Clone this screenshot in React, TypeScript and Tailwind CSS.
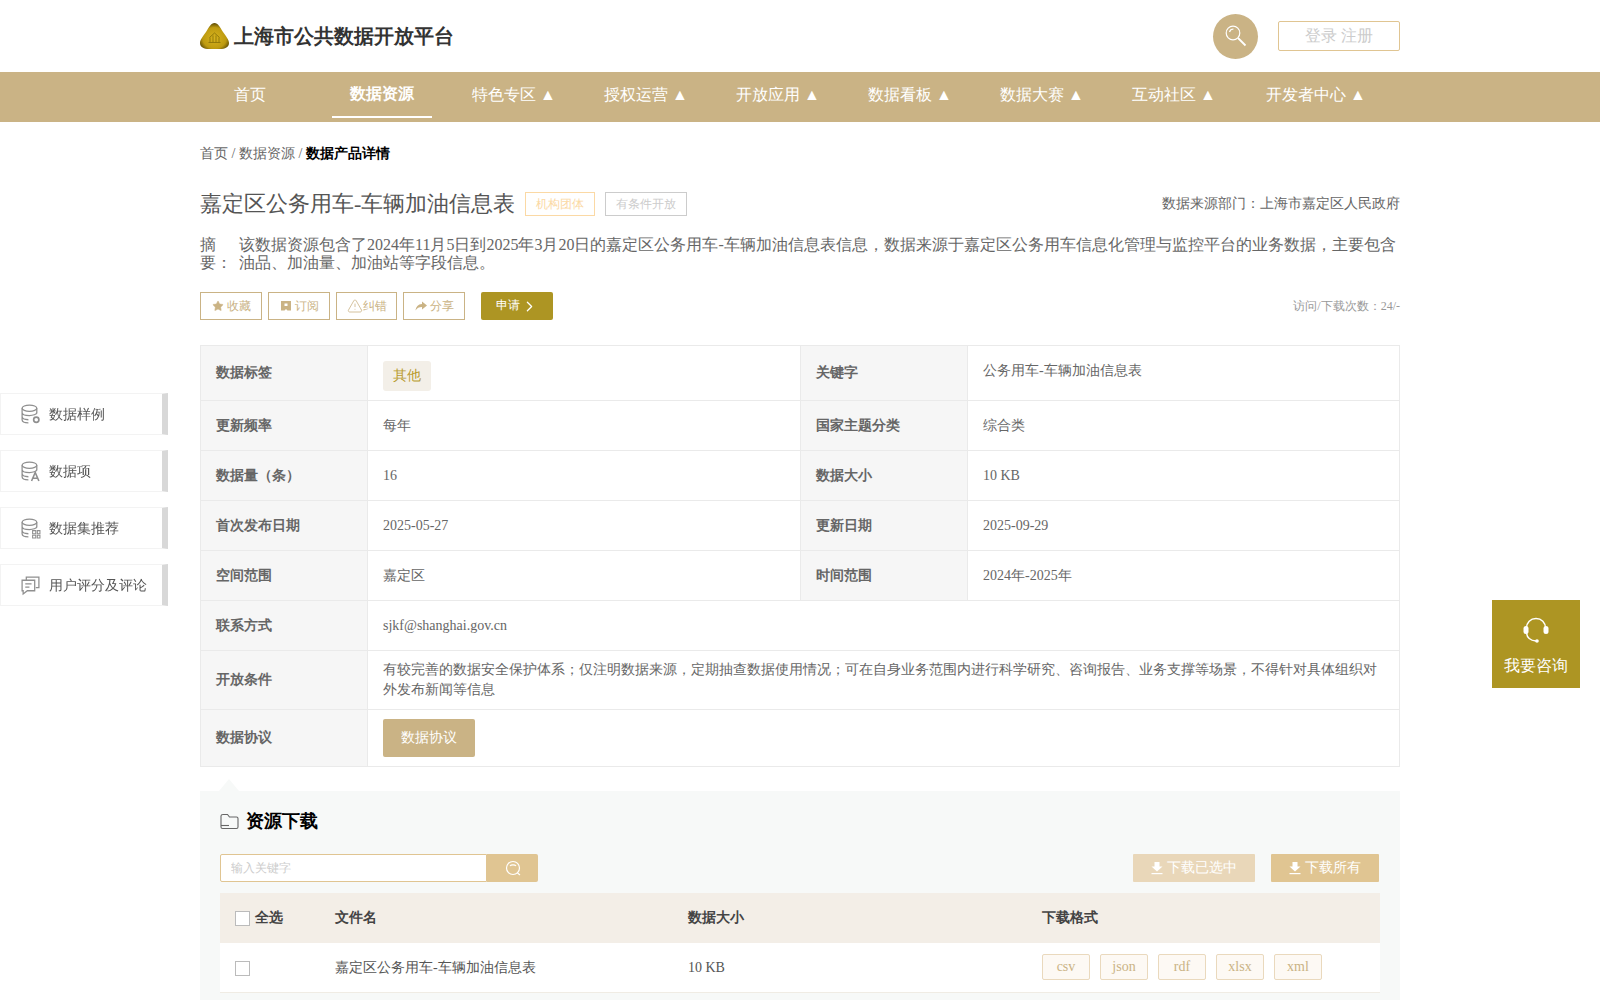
import { ChevronRight, Star, TriangleAlert } from "lucide-react";

const navItems = ["特色专区 ▲", "授权运营 ▲", "开放应用 ▲", "数据看板 ▲", "数据大赛 ▲", "互动社区 ▲"];

const labelCell = "bg-[#f6f6f6] border border-[#eaeaea] pl-[15px] font-bold align-middle";
const valueCell = "border border-[#eaeaea] pl-[15px] pr-[15px] align-middle";

function Logo() {
  return (
    <svg width="29" height="26" viewBox="0 0 29 26">
      <defs>
        <radialGradient id="gold" cx="50%" cy="58%" r="58%">
          <stop offset="0%" stopColor="#d8b41e" />
          <stop offset="70%" stopColor="#bd9a10" />
          <stop offset="100%" stopColor="#5a4905" />
        </radialGradient>
      </defs>
      <path d="M14.500 0C18 0 20 4 23 9C26 13 29 17 29 20C29 24 25 26 20 26H9C4 26 0 24 0 20C0 17 3 13 6 9C9 4 11 0 14.500 0Z" fill="url(#gold)" />
      <path d="M8.500 19.500H20.500M10 19.500V14.500M13 19.500V12.500M16 19.500V12.500M19 19.500V14.500M9.500 14.500L14.500 10L19.500 14.500" stroke="#937a0a" strokeWidth="1" fill="none" />
    </svg>
  );
}

function HeaderSearch() {
  return (
    <svg width="22" height="22" viewBox="0 0 22 22" fill="none" stroke="#fff" strokeWidth="1.200">
      <circle cx="8" cy="8" r="6.800" />
      <path d="M4.500 7C5 5 6.500 4 8.500 4" />
      <path d="M13 13L20.500 20.500" strokeWidth="1.800" />
    </svg>
  );
}

function DbIcon({ kind }: { kind: "gear" | "a" | "grid" }) {
  return (
    <svg width="21" height="21" viewBox="0 0 20 20" fill="none" stroke="#8f8f8f" strokeWidth="1.200">
      <ellipse cx="9" cy="4" rx="7" ry="3" />
      <path d="M2 4V15C2 17 5 18 8 18M16 4V9M2 8C2 10 5 11 9 11C12 11 16 10 16 8M2 12C2 14 5 15 8 15" />
      {kind === "gear" && <circle cx="15.500" cy="15" r="2.500" strokeWidth="1.600" />}
      {kind === "a" && <path d="M11 19L14.500 11L18 19M12.300 16.500H16.700" strokeWidth="1.500" />}
      {kind === "grid" && (
        <path d="M12 12H15V15H12ZM16.500 12H19V15H16.500ZM12 16.500H15V19H12ZM16.500 16.500H19V19H16.500Z" strokeWidth="1" />
      )}
    </svg>
  );
}

function CommentIcon() {
  return (
    <svg width="21" height="21" viewBox="0 0 20 20" fill="none" stroke="#8f8f8f" strokeWidth="1.200">
      <path d="M6 5V2H18V12H15" />
      <path d="M2 5H14V15H7L3 18V15H2Z" />
      <path d="M5 8.500H11M5 11.500H9" />
    </svg>
  );
}

function DownloadIcon() {
  return (
    <svg width="12" height="14" viewBox="0 0 12 14" fill="#fff">
      <path d="M3.500 1H8.500V5.500H11.500L6 10.500L0.500 5.500H3.500Z" />
      <rect x="0.500" y="12" width="11" height="1.200" />
    </svg>
  );
}

function Headset() {
  return (
    <svg width="26" height="26" viewBox="0 0 26 26" fill="none">
      <path d="M3.500 13V11C3.500 5.500 7.500 1.500 13 1.500C18.500 1.500 22.500 5.500 22.500 11V13" stroke="#fff" strokeWidth="1.500" />
      <path d="M3.500 16C4 20 7 23.500 13 24" stroke="#fff" strokeWidth="1.500" />
      <rect x="0.500" y="9" width="5" height="8" rx="2.500" fill="#fff" />
      <rect x="20.500" y="9" width="5" height="8" rx="2.500" fill="#fff" />
      <circle cx="14" cy="24" r="1.800" fill="#fff" />
    </svg>
  );
}

function ActionButton({ icon, text, className }: { icon: React.ReactNode; text: string; className: string }) {
  return (
    <button className={"h-[28px] border border-[#cab385] text-xs text-[#cab385] flex items-center justify-center " + className}>
      {icon}
      {text}
    </button>
  );
}

function SideItem({ icon, text }: { icon: React.ReactNode; text: string }) {
  return (
    <div className="w-[168px] h-[42px] flex items-center bg-white border border-[#f3f3f3] border-r-[6px] border-r-[#d8d8d8] pl-[19px] text-sm text-[#555]">
      <span className="w-[29px] flex">{icon}</span>
      <span className="pt-[2px]">{text}</span>
    </div>
  );
}

export default function App() {
  return (
    <div className="h-[1000px] overflow-hidden bg-white text-[#666] [font-family:'Liberation_Serif',serif]">
      <header className="h-[72px] w-[1200px] mx-auto flex items-center">
        <Logo />
        <h1 className="ml-[5px] text-xl font-bold text-[#333]">上海市公共数据开放平台</h1>
        <div className="ml-auto w-[45px] h-[45px] rounded-full bg-[#cab385] flex items-center justify-center">
          <HeaderSearch />
        </div>
        <div className="ml-[20px] w-[122px] h-[30px] border border-[#e0c592] rounded-[2px] flex items-center justify-center text-base text-[#ccc]">
          登录 注册
        </div>
      </header>

      <nav className="h-[50px] bg-[#cab385]">
        <div className="w-[1200px] mx-auto flex gap-[32px] h-full text-base text-white">
          <a className="w-[100px] flex items-center justify-center pb-[4px]">首页</a>
          <a className="w-[100px] flex items-center justify-center font-bold border-b-2 border-white h-[46px]">数据资源</a>
          {navItems.map((item) => (
            <a key={item} className="w-[100px] flex items-center justify-center pb-[4px]">
              {item}
            </a>
          ))}
          <a className="w-[120px] flex items-center justify-center pb-[4px]">开发者中心 ▲</a>
        </div>
      </nav>

      <main className="w-[1200px] mx-auto">
        <div className="pt-[24px] text-sm leading-[16px]">
          首页 / 数据资源 / <span className="font-bold text-black">数据产品详情</span>
        </div>

        <div className="mt-[26px] flex items-center h-[32px]">
          <h2 className="text-[22px] text-[#555] pb-[2px]">嘉定区公务用车-车辆加油信息表</h2>
          <span className="ml-[10px] w-[70px] h-[24px] border border-[#fbd9a5] text-xs text-[#fbd9a5] flex items-center justify-center">机构团体</span>
          <span className="ml-[10px] w-[82px] h-[24px] border border-[#ccc] text-xs text-[#ccc] flex items-center justify-center">有条件开放</span>
          <span className="ml-auto text-sm">数据来源部门：上海市嘉定区人民政府</span>
        </div>

        <div className="mt-[16px] flex text-base leading-[18px]">
          <div className="w-[39px] shrink-0">
            摘
            <br />
            要：
          </div>
          <p className="pr-[4px]">
            该数据资源包含了2024年11月5日到2025年3月20日的嘉定区公务用车-车辆加油信息表信息，数据来源于嘉定区公务用车信息化管理与监控平台的业务数据，主要包含油品、加油量、加油站等字段信息。
          </p>
        </div>

        <div className="mt-[20px] flex items-center">
          <ActionButton className="w-[62px] gap-[3px]" icon={<Star size={12} fill="#cab385" strokeWidth={1} />} text="收藏" />
          <ActionButton
            className="w-[62px] ml-[6px] gap-[3px]"
            icon={
              <svg width="12" height="12" viewBox="0 0 12 12" fill="#cab385">
                <path d="M1 1H11V10.500H7.500L6 9L4.500 10.500H1ZM4.500 3.500V6H7.500V3.500Z" />
              </svg>
            }
            text="订阅"
          />
          <ActionButton className="w-[61px] ml-[6px]" icon={<TriangleAlert size={16} strokeWidth={1.200} />} text="纠错" />
          <ActionButton
            className="w-[62px] ml-[6px] gap-[3px]"
            icon={
              <svg width="12" height="12" viewBox="0 0 12 12" fill="#cab385">
                <path d="M7 1.500L12 5.500L7 9.500V7C4 7 2 8 0.500 10.500C1 7 3 4 7 4Z" />
              </svg>
            }
            text="分享"
          />
          <button className="ml-[16px] w-[72px] h-[28px] rounded-[2px] bg-[#ad9523] text-xs text-white flex items-center justify-center gap-[1px]">
            <span className="pb-[3px]">申请</span>
            <ChevronRight size={17} strokeWidth={1.800} />
          </button>
          <span className="ml-auto text-xs text-[#999]">访问/下载次数：24/-</span>
        </div>

        <table className="mt-[25px] w-[1199px] table-fixed border-collapse text-sm">
          <colgroup>
            <col className="w-[167px]" />
            <col className="w-[433px]" />
            <col className="w-[167px]" />
            <col className="w-[432px]" />
          </colgroup>
          <tbody>
            <tr className="h-[55px]">
              <td className={labelCell}>数据标签</td>
              <td className={valueCell}>
                <span className="mt-[6px] inline-flex w-[48px] h-[30px] rounded-[3px] bg-[#f3efe8] text-[#b89b2e] items-center justify-center">其他</span>
              </td>
              <td className={labelCell}>关键字</td>
              <td className={valueCell + " pb-[5px]"}>公务用车-车辆加油信息表</td>
            </tr>
            {[
              ["更新频率", "每年", "国家主题分类", "综合类"],
              ["数据量（条）", "16", "数据大小", "10 KB"],
              ["首次发布日期", "2025-05-27", "更新日期", "2025-09-29"],
              ["空间范围", "嘉定区", "时间范围", "2024年-2025年"],
            ].map((row) => (
              <tr key={row[0]} className="h-[50px]">
                <td className={labelCell}>{row[0]}</td>
                <td className={valueCell}>{row[1]}</td>
                <td className={labelCell}>{row[2]}</td>
                <td className={valueCell}>{row[3]}</td>
              </tr>
            ))}
            <tr className="h-[50px]">
              <td className={labelCell}>联系方式</td>
              <td className={valueCell} colSpan={3}>sjkf@shanghai.gov.cn</td>
            </tr>
            <tr className="h-[59px]">
              <td className={labelCell}>开放条件</td>
              <td className={valueCell + " leading-[20px]"} colSpan={3}>
                有较完善的数据安全保护体系；仅注明数据来源，定期抽查数据使用情况；可在自身业务范围内进行科学研究、咨询报告、业务支撑等场景，不得针对具体组织对外发布新闻等信息
              </td>
            </tr>
            <tr className="h-[57px]">
              <td className={labelCell}>数据协议</td>
              <td className={valueCell} colSpan={3}>
                <button className="w-[92px] h-[38px] rounded-[2px] bg-[#cab385] text-white flex items-center justify-center">数据协议</button>
              </td>
            </tr>
          </tbody>
        </table>

        <section className="relative mt-[24px] bg-[#f7f9f8] px-[20px] pt-[20px] pb-[40px]">
          <span className="absolute left-[19px] -top-[12px] w-0 h-0 border-x-[10px] border-x-transparent border-b-[12px] border-b-[#f7f9f8]" />
          <div className="flex items-center h-[20px]">
            <svg width="19" height="17" viewBox="0 0 19 17" fill="none" stroke="#666" strokeWidth="1.100">
              <path d="M1 3C1 2 2 1.500 3 1.500H7.500L9.500 4H16.500C17.500 4 18 4.500 18 5.500V14C18 15 17.500 15.500 16.500 15.500H2.500C1.500 15.500 1 15 1 14Z" />
              <path d="M1 12.500H9" />
            </svg>
            <h3 className="ml-[7px] text-lg font-bold text-black">资源下载</h3>
          </div>

          <div className="mt-[23px] flex items-center">
            <input
              placeholder="输入关键字"
              className="w-[267px] h-[28px] bg-white border border-[#e0c592] rounded-l-[2px] px-[10px] text-xs placeholder:text-[#ccc] outline-none"
            />
            <button className="w-[51px] h-[28px] bg-[#e0c592] rounded-r-[2px] flex items-center justify-center">
              <svg width="16" height="16" viewBox="0 0 16 16" fill="none" stroke="#fff" strokeWidth="1.200">
                <circle cx="8" cy="8" r="6.500" />
                <path d="M5 6C6 4.500 10 4.500 11 6M12.500 13L15 15" />
              </svg>
            </button>
            <button className="ml-auto w-[122px] h-[28px] bg-[#e9d7b9] rounded-[1px] text-sm text-white flex items-center justify-center gap-[4px]">
              <DownloadIcon />
              下载已选中
            </button>
            <button className="ml-[16px] mr-[1px] w-[108px] h-[28px] bg-[#e0c592] rounded-[1px] text-sm text-white flex items-center justify-center gap-[4px]">
              <DownloadIcon />
              下载所有
            </button>
          </div>

          <table className="mt-[11px] w-[1160px] table-fixed border-collapse text-sm">
            <colgroup>
              <col className="w-[115px]" />
              <col className="w-[353px]" />
              <col className="w-[354px]" />
              <col className="w-[338px]" />
            </colgroup>
            <thead>
              <tr className="h-[50px] bg-[#f3eee7] text-[#444] text-left">
                <th className="pl-[15px] font-bold">
                  <span className="flex items-center gap-[5px]">
                    <span className="w-[15px] h-[15px] bg-white border border-[#bbb]" />
                    全选
                  </span>
                </th>
                <th className="font-bold">文件名</th>
                <th className="font-bold">数据大小</th>
                <th className="font-bold">下载格式</th>
              </tr>
            </thead>
            <tbody>
              <tr className="h-[49px] bg-white border-b border-[#f0ece4] text-[#555]">
                <td className="pl-[15px] pt-[2px]">
                  <span className="block w-[15px] h-[15px] bg-white border border-[#bbb]" />
                </td>
                <td className="pt-[2px]">嘉定区公务用车-车辆加油信息表</td>
                <td className="pt-[2px]">10 KB</td>
                <td>
                  <div className="flex gap-[10px] pb-[1px]">
                    {["csv", "json", "rdf", "xlsx", "xml"].map((f) => (
                      <span key={f} className="w-[48px] h-[26px] bg-[#fdf9f4] border border-[#ead9bd] rounded-[2px] text-[#cab385] flex items-center justify-center">
                        {f}
                      </span>
                    ))}
                  </div>
                </td>
              </tr>
            </tbody>
          </table>
        </section>
      </main>

      <aside className="fixed left-0 top-[393px] flex flex-col gap-[15px]">
        <SideItem icon={<DbIcon kind="gear" />} text="数据样例" />
        <SideItem icon={<DbIcon kind="a" />} text="数据项" />
        <SideItem icon={<DbIcon kind="grid" />} text="数据集推荐" />
        <SideItem icon={<CommentIcon />} text="用户评分及评论" />
      </aside>

      <div className="fixed left-[1492px] top-[600px] w-[88px] h-[88px] bg-[#ad9523] pt-[6px] flex flex-col items-center justify-center gap-[11px] text-base text-white">
        <Headset />
        我要咨询
      </div>
    </div>
  );
}
